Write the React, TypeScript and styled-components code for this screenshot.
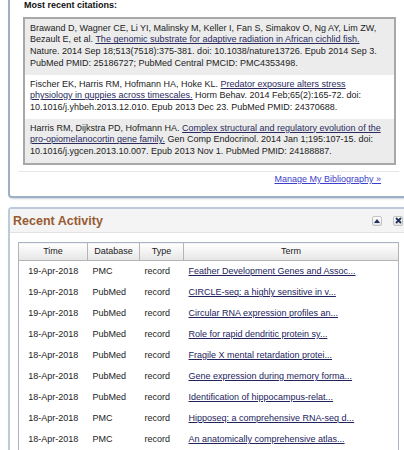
import styled, { createGlobalStyle } from "styled-components";

type Activity = {
    time: string,
    db: string,
    type: string,
    term: string
}

const activity: Activity[] = [
    { time: "19-Apr-2018", db: "PMC", type: "record", term: "Feather Development Genes and Assoc..." },
    { time: "19-Apr-2018", db: "PubMed", type: "record", term: "CIRCLE-seq: a highly sensitive in v..." },
    { time: "19-Apr-2018", db: "PubMed", type: "record", term: "Circular RNA expression profiles an..." },
    { time: "18-Apr-2018", db: "PubMed", type: "record", term: "Role for rapid dendritic protein sy..." },
    { time: "18-Apr-2018", db: "PubMed", type: "record", term: "Fragile X mental retardation protei..." },
    { time: "18-Apr-2018", db: "PubMed", type: "record", term: "Gene expression during memory forma..." },
    { time: "18-Apr-2018", db: "PubMed", type: "record", term: "Identification of hippocampus-relat..." },
    { time: "18-Apr-2018", db: "PMC", type: "record", term: "Hipposeq: a comprehensive RNA-seq d..." },
    { time: "18-Apr-2018", db: "PMC", type: "record", term: "An anatomically comprehensive atlas..." },
]

const GlobalStyle = createGlobalStyle`
html, body {
    margin: 0;
    padding: 0;
    background: #fff;
    overflow: hidden;
}
body {
    font-family: "Liberation Sans", Arial, sans-serif;
    font-size: 9px;
    line-height: 11.7px;
    color: #222;
}
`;

export default function App() {
    return (
        <>
            <GlobalStyle />
            <Page>
                <Panel $clipTop>
                    <CitationsBody>
                        <SectionLabel>Most recent citations:</SectionLabel>
                        <CitationList>
                            <Citation $shaded>
                                Brawand D, Wagner CE, Li YI, Malinsky M, Keller I, Fan S, Simakov O, Ng AY, Lim ZW,
                                Bezault E, et al. <CiteLink href="#">The genomic substrate for adaptive radiation in African cichlid fish.</CiteLink>{" "}
                                Nature. 2014 Sep 18;513(7518):375-381. doi: 10.1038/nature13726. Epub 2014 Sep 3.
                                PubMed PMID: 25186727; PubMed Central PMCID: PMC4353498.
                            </Citation>
                            <Citation>
                                Fischer EK, Harris RM, Hofmann HA, Hoke KL. <CiteLink href="#">Predator exposure alters stress
                                physiology in guppies across timescales.</CiteLink> Horm Behav. 2014 Feb;65(2):165-72. doi:
                                10.1016/j.yhbeh.2013.12.010. Epub 2013 Dec 23. PubMed PMID: 24370688.
                            </Citation>
                            <Citation $shaded>
                                Harris RM, Dijkstra PD, Hofmann HA. <CiteLink href="#">Complex structural and regulatory evolution of the
                                pro-opiomelanocortin gene family.</CiteLink> Gen Comp Endocrinol. 2014 Jan 1;195:107-15. doi:
                                10.1016/j.ygcen.2013.10.007. Epub 2013 Nov 1. PubMed PMID: 24188887.
                            </Citation>
                        </CitationList>
                        <Divider />
                        <ManageRow>
                            <ManageLink href="#">Manage My Bibliography »</ManageLink>
                        </ManageRow>
                    </CitationsBody>
                </Panel>

                <Panel>
                    <PanelHeader>
                        <PanelTitle>Recent Activity</PanelTitle>
                        <HeaderTools>
                            <ToolButton aria-label="collapse">
                                <svg width="6" height="4" viewBox="0 0 6 4">
                                    <path d="M0 4 L3 0 L6 4 Z" fill="#24315e" />
                                </svg>
                            </ToolButton>
                            <ToolButton aria-label="close">
                                <svg width="7" height="7" viewBox="0 0 7 7">
                                    <path d="M1 1 L6 6 M6 1 L1 6" stroke="#24315e" strokeWidth="1.8" />
                                </svg>
                            </ToolButton>
                        </HeaderTools>
                    </PanelHeader>
                    <ActivityBody>
                        <ActivityTable>
                            <colgroup>
                                <col style={{ width: 69 }} />
                                <col style={{ width: 52 }} />
                                <col style={{ width: 44 }} />
                                <col />
                            </colgroup>
                            <thead>
                                <tr>
                                    <HeadCell>Time</HeadCell>
                                    <HeadCell>Database</HeadCell>
                                    <HeadCell>Type</HeadCell>
                                    <HeadCell>Term</HeadCell>
                                </tr>
                            </thead>
                            <tbody>
                                {activity.map((a, i) => (
                                    <tr key={i}>
                                        <Cell $center>{a.time}</Cell>
                                        <Cell>{a.db}</Cell>
                                        <Cell>{a.type}</Cell>
                                        <Cell><TermLink href="#">{a.term}</TermLink></Cell>
                                    </tr>
                                ))}
                            </tbody>
                        </ActivityTable>
                    </ActivityBody>
                </Panel>
            </Page>
        </>
    )
}

const Page = styled.div`
display: flex;
flex-direction: column;
gap: 9px;
padding-left: 8px;
width: 440px;
`;

const Panel = styled.section<{ $clipTop?: boolean }>`
box-sizing: border-box;
width: 401px;
background: #fff;
border: 2px solid;
border-top-style: ${({ $clipTop }) => $clipTop ? "none" : "solid"};
border-radius: ${({ $clipTop }) => $clipTop ? "0 0 4px 4px" : "4px 4px 0 0"};
border-color: ${({ $clipTop }) => $clipTop ? "#9db0c6" : "#bccadb"};
box-shadow: 1px 1px 2px rgba(60, 80, 110, 0.25);
`;

const CitationsBody = styled.div`
padding: 0 8px 11px 8px;
`;

const SectionLabel = styled.div`
font-weight: bold;
padding-left: 6px;
color: #111;
`;

const CitationList = styled.div`
margin: 5px 3px 0 5px;
border: 2px solid #a8a8a8;
`;

const Citation = styled.div<{ $shaded?: boolean }>`
padding: 4px 7px 5px 5px;
background: ${({ $shaded }) => $shaded ? "#ececec" : "#fff"};
color: #222;
`;

const CiteLink = styled.a`
color: #2a2a5e;
text-decoration: underline;
`;

const Divider = styled.hr`
margin: 6px 0 0 0;
border: none;
border-top: 1px solid #e6e6e6;
`;

const ManageRow = styled.div`
display: flex;
justify-content: flex-end;
padding: 2px 18px 0 0;
`;

const ManageLink = styled.a`
color: #3d3dcc;
text-decoration: underline;
`;

const PanelHeader = styled.div`
display: flex;
align-items: center;
justify-content: space-between;
height: 23px;
padding: 0 4px 0 3px;
background: #f4f4f4;
border-bottom: 1px solid #e2e2e2;
`;

const PanelTitle = styled.h2`
margin: 0;
font-size: 12.5px;
line-height: 14px;
font-weight: bold;
color: #985a33;
`;

const HeaderTools = styled.div`
display: flex;
align-items: center;
gap: 11px;
`;

const ToolButton = styled.button`
display: grid;
place-content: center;
box-sizing: border-box;
width: 10px;
height: 10px;
padding: 0;
border: 1px solid #c3c3c3;
border-radius: 2px;
background: linear-gradient(#ffffff, #e4e4e4);
cursor: pointer;
`;

const ActivityBody = styled.div`
padding: 9px 8px 0 8px;
`;

const ActivityTable = styled.table`
width: 381px;
table-layout: fixed;
border-collapse: collapse;
border: 1px solid #a8b4c3;
`;

const HeadCell = styled.th`
height: 17px;
padding: 0;
font-weight: normal;
text-align: center;
color: #222;
background: linear-gradient(#ffffff, #e6e6e6);
border: 1px solid #b4b4b4;
border-top: none;
`;

const Cell = styled.td<{ $center?: boolean }>`
height: 21px;
padding: 0 0 0 5px;
text-align: ${({ $center }) => $center ? "center" : "left"};
white-space: nowrap;
color: #222;
${({ $center }) => $center && "padding: 0;"}
`;

const TermLink = styled.a`
color: #23235c;
text-decoration: underline;
`;
